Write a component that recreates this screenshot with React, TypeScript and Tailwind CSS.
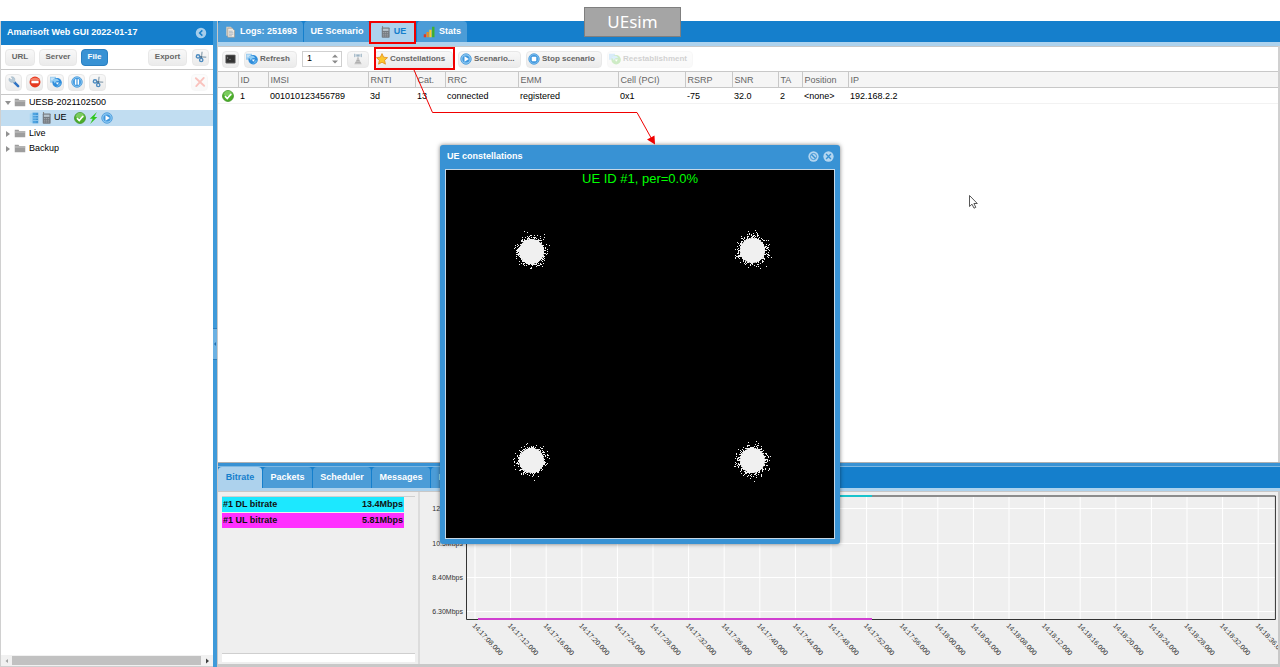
import React, { useState } from 'react';

type IconProps = { className?: string };

const CheckIcon = ({ className = 'w-3 h-3' }: IconProps) => (
  <svg viewBox="0 0 16 16" className={`${className} shrink-0`}>
    <circle cx="8" cy="8" r="7.3" fill="#4caf2a" stroke="#3a8f20" />
    <path d="M2 7a6 6 0 0 1 12 0q-6 2-12 0z" fill="#8fd873" opacity=".7" />
    <path d="M4 8.2l3 3.2 5.2-6" fill="none" stroke="#fff" strokeWidth="2.3" />
  </svg>
);

const PlayIcon = ({ className = 'w-3 h-3' }: IconProps) => (
  <svg viewBox="0 0 16 16" className={`${className} shrink-0`}>
    <circle cx="8" cy="8" r="7" fill="#8cc8f2" stroke="#4f9ddb" strokeWidth="1.2" />
    <circle cx="8" cy="8" r="4.8" fill="#3f97de" />
    <path d="M6 4.2v7.6l5.8-3.8z" fill="#fff" />
  </svg>
);

const StopIcon = ({ className = 'w-3 h-3' }: IconProps) => (
  <svg viewBox="0 0 16 16" className={`${className} shrink-0`}>
    <circle cx="8" cy="8" r="7" fill="#7fc0f0" stroke="#4f9ddb" strokeWidth="1.2" />
    <circle cx="8" cy="8" r="5.2" fill="#3f97de" />
    <rect x="5" y="5" width="6" height="6" rx="1" fill="#fff" />
  </svg>
);

const PauseIcon = ({ className = 'w-3 h-3' }: IconProps) => (
  <svg viewBox="0 0 16 16" className={`${className} shrink-0`}>
    <circle cx="8" cy="8" r="7" fill="#8cc8f2" stroke="#4f9ddb" strokeWidth="1.2" />
    <circle cx="8" cy="8" r="5.2" fill="#3f97de" />
    <path d="M6.2 4.3v7.4M9.8 4.3v7.4" stroke="#fff" strokeWidth="2" />
  </svg>
);

const RefreshIcon = ({ className = 'w-3 h-3' }: IconProps) => (
  <svg viewBox="0 0 16 16" className={`${className} shrink-0`}>
    <path d="M0 1h8v8H0z" fill="#9ccdf0" />
    <path d="M1 3h5M1 5h4" stroke="#e3f2fc" />
    <circle cx="9.500" cy="9" r="6.300" fill="#2f8ddb" />
    <path d="M3.500 5.500q6-4 9 1.500-5-1-6 3z" fill="#8fcdf5" />
    <path d="M15 10q-3 5-7.500 4.500 4-1 4-4.500z" fill="#6bb8ee" />
    <path d="M8 8.500h4L9.500 11.500z" fill="#fff" />
  </svg>
);

const RestoreIcon = ({ className = 'w-3 h-3' }: IconProps) => (
  <svg viewBox="0 0 16 16" className={`${className} shrink-0`}>
    <path d="M0 1h8v8H0z" fill="#7fbfec" />
    <circle cx="9.500" cy="9" r="6.300" fill="#5fc043" />
    <path d="M3.500 5.500q6-4 9 1.500-5-1-6 3z" fill="#8fcdf5" />
    <path d="M8 8.500h4L9.500 11.500z" fill="#fff" />
  </svg>
);

const CutIcon = ({ className = 'w-3 h-3' }: IconProps) => (
  <svg viewBox="0 0 16 16" className={`${className} shrink-0`}>
    <path d="M9.500 1L8.300 8.500M15 8.200L6 7.800" stroke="#9fb0bc" strokeWidth="2" />
    <circle cx="4" cy="7.200" r="2.200" fill="none" stroke="#4d8bc0" strokeWidth="1.900" />
    <circle cx="8.300" cy="12" r="2.200" fill="none" stroke="#4d8bc0" strokeWidth="1.900" />
    <circle cx="8.200" cy="8" r="1.500" fill="#4a6f8c" />
  </svg>
);

const WrenchIcon = () => (
  <svg viewBox="0 0 16 16" className="w-3 h-3 shrink-0">
    <path d="M8.500 8.500l5 5" stroke="#2f73c4" strokeWidth="3.400" strokeLinecap="round" />
    <path d="M1.500 3l3 2L6 3.500 4.200 1a4 4 0 0 1 4.800 5.200l1 1L8 9.200l-1.200-1A4 4 0 0 1 1.500 3z" fill="#b7cbd9" stroke="#8fa6b7" strokeWidth=".5" />
  </svg>
);

const NoEntryIcon = () => (
  <svg viewBox="0 0 16 16" className="w-3 h-3 shrink-0">
    <circle cx="8" cy="8" r="7.300" fill="#e5391f" />
    <path d="M1.500 6a7 6 0 0 1 13 0z" fill="#f48069" />
    <rect x="3.200" y="6.200" width="9.600" height="3.600" rx=".6" fill="#fff" />
  </svg>
);

const FolderIcon = () => (
  <svg viewBox="0 0 16 12" className="w-3 h-[9px] shrink-0">
    <path d="M1 1h5l1 1.500h8V11H1z" fill="#9e9e9e" />
    <path d="M1 4h14" stroke="#d8d8d8" strokeWidth="1" />
  </svg>
);

const ServerIcon = () => (
  <svg viewBox="0 0 14 16" className="w-[10px] h-3 shrink-0">
    <path d="M1 2l4-1.500V15.500L1 14z" fill="#a6d6f5" />
    <path d="M5 .5h8v15H5z" fill="#4ea3e0" />
    <path d="M5 4.500h8M5 8h8M5 11.500h8" stroke="#9fd0f2" strokeWidth="1" />
    <path d="M10.500 2.500h1.500M10.500 6.300h1.500M10.500 9.800h1.500M10.500 13.500h1.500" stroke="#1c6db0" strokeWidth="1" />
  </svg>
);

const PhoneIcon = () => (
  <svg viewBox="0 0 12 16" className="w-[9px] h-3 shrink-0">
    <path d="M2 0v3" stroke="#888" strokeWidth="1.500" />
    <rect x="1" y="2" width="10.500" height="13.500" rx="1" fill="#747a80" />
    <rect x="2.500" y="3.500" width="7.500" height="3" fill="#b9c6cf" />
    <path d="M2.500 8.700h7.500M2.500 11h7.500M2.500 13.300h7.500" stroke="#a9afb4" strokeWidth="1" strokeDasharray="1.800 .8" />
  </svg>
);

const BoltIcon = () => (
  <svg viewBox="0 0 12 16" className="w-[9px] h-3 shrink-0">
    <path d="M10.500 0L1 9h4l-3.500 7L11 6.500H7z" fill="#2fc71e" />
  </svg>
);

const DocIcon = () => (
  <svg viewBox="0 0 16 16" className="w-3 h-3 shrink-0">
    <path d="M3 1h6l3 3v9H3z" fill="#d9cfc0" />
    <path d="M5 3h6l3 3v9H5z" fill="#efe9e0" stroke="#9a9288" strokeWidth=".8" />
    <path d="M6.500 7h5M6.500 9h6M6.500 11h6M6.500 13h4" stroke="#8fa6bb" strokeWidth=".9" />
  </svg>
);

const StatsIcon = () => (
  <svg viewBox="0 0 16 16" className="w-3 h-3 shrink-0">
    <path d="M1 11h3v4H1z" fill="#e53b1e" />
    <path d="M4.700 8h3v7h-3z" fill="#f08a1d" />
    <path d="M8.400 5h3v10h-3z" fill="#f3cf2e" />
    <path d="M12.100 1h3.200v14h-3.200z" fill="#3fb02c" />
  </svg>
);

const TerminalIcon = () => (
  <svg viewBox="0 0 16 14" className="w-[11px] h-[10px] shrink-0">
    <rect x="1" y="1" width="14" height="12" rx="1" fill="#333" stroke="#8a8a8a" />
    <path d="M3 4l1.500 1.200L3 6.500M6 7.500h2.500" fill="none" stroke="#bbb" strokeWidth=".8" />
  </svg>
);

const AntennaIcon = () => (
  <svg viewBox="0 0 16 16" className="w-3 h-3 shrink-0 opacity-60">
    <path d="M3.500 1v4.500M12.500 1v4.500M5.500 1.500v3.500M10.500 1.500v3.500" fill="none" stroke="#5d86a3" strokeWidth="1.200" />
    <circle cx="8" cy="3.300" r="1.700" fill="#5d86a3" />
    <path d="M7 5.500h2l1 4 3 5.500H3l3-5.500z" fill="#a5a5a5" />
    <path d="M6 10h4M4.500 12.500h7" fill="none" stroke="#777" strokeWidth="1" />
  </svg>
);

const StarIcon = () => (
  <svg viewBox="0 0 16 16" className="w-3 h-3 shrink-0">
    <path d="M8 .8l2.200 4.800 5.200.6-3.900 3.500 1.100 5.200L8 12.300l-4.600 2.600 1.100-5.200L.6 6.200l5.200-.6z" fill="#fcc62d" stroke="#e08a12" strokeWidth="1" />
  </svg>
);

const Twisty = ({ open }: { open?: boolean }) => (
  <svg viewBox="0 0 6 6" className="w-[6px] h-[6px] shrink-0">
    <path d={open ? 'M0 1h6L3 5z' : 'M1 0v6l4-3z'} fill="#919191" />
  </svg>
);

const buttonBase = 'flex items-center h-[17px] rounded-sm border text-[8px] font-bold';
const greyColours = 'border-[#e8e8e8] bg-linear-to-b from-[#f8f8f8] to-[#ebebeb] text-[#666]';
const buttonGrey = `${buttonBase} ${greyColours} justify-center`;
const buttonIcon = `${buttonBase} ${greyColours} justify-start gap-0.5 pl-px whitespace-nowrap`;

const tabs = [
  { label: 'Logs: 251693', icon: <DocIcon />, width: 'w-[85px]' },
  { label: 'UE Scenario', icon: null, width: 'w-[66px]' },
  { label: 'UE', icon: <PhoneIcon />, width: 'w-[45px]' },
  { label: 'Stats', icon: <StatsIcon />, width: 'w-[50px]' },
];

const statTabs = [
  { label: 'Bitrate', width: 'w-[44px]' },
  { label: 'Packets', width: 'w-[49px]' },
  { label: 'Scheduler', width: 'w-[58px]' },
  { label: 'Messages', width: 'w-[58px]' },
  { label: 'Info', width: 'w-[32px]' },
];

const columns = [
  { title: '', value: '', width: 'w-[20px]' },
  { title: 'ID', value: '1', width: 'w-[30px]' },
  { title: 'IMSI', value: '001010123456789', width: 'w-[100px]' },
  { title: 'RNTI', value: '3d', width: 'w-[47px]' },
  { title: 'Cat.', value: '13', width: 'w-[30px]' },
  { title: 'RRC', value: 'connected', width: 'w-[73px]' },
  { title: 'EMM', value: 'registered', width: 'w-[100px]' },
  { title: 'Cell (PCI)', value: '0x1', width: 'w-[67px]' },
  { title: 'RSRP', value: '-75', width: 'w-[47px]' },
  { title: 'SNR', value: '32.0', width: 'w-[46px]' },
  { title: 'TA', value: '2', width: 'w-[24px]' },
  { title: 'Position', value: '<none>', width: 'w-[46px]' },
  { title: 'IP', value: '192.168.2.2', width: '' },
];

function Sidebar() {
  return (
    <aside className="flex w-[213px] shrink-0 flex-col border-l border-[#d0d0d0]">
      <header className="flex h-6 items-center justify-between bg-[#157fcc] pl-1.5 pr-1.5">
        <h1 className="text-[9px] font-bold text-white whitespace-nowrap">Amarisoft Web GUI 2022-01-17</h1>
        <button aria-label="Collapse">
          <svg viewBox="0 0 16 16" className="w-3 h-3">
            <circle cx="8" cy="8" r="7" fill="#a5cdeb" />
            <path d="M9.800 4.500L6.200 8l3.600 3.500" fill="none" stroke="#157fcc" strokeWidth="2" />
          </svg>
        </button>
      </header>
      <div className="flex h-[25px] items-center border-b border-[#c8c8c8] px-1">
        <button className={`${buttonGrey} w-[30px]`}>URL</button>
        <button className={`${buttonGrey} ml-1 w-[38px]`}>Server</button>
        <button className={`${buttonBase} ml-1 w-[27px] justify-center border-[#2a7fc0] bg-[#3892d4] text-white`}>File</button>
        <span className="flex-1" />
        <button className={`${buttonGrey} w-[39px]`}>Export</button>
        <button className={`${buttonGrey} ml-[5px] w-[17px]`} aria-label="Cut"><CutIcon /></button>
      </div>
      <div className="flex h-[25px] items-center gap-1 border-b border-[#c8c8c8] px-1">
        <button className={`${buttonGrey} w-[17px]`} aria-label="Settings"><WrenchIcon /></button>
        <button className={`${buttonGrey} w-[17px]`} aria-label="Remove"><NoEntryIcon /></button>
        <button className={`${buttonGrey} w-[17px]`} aria-label="Reload"><RefreshIcon /></button>
        <button className={`${buttonGrey} w-[17px]`} aria-label="Pause"><PauseIcon /></button>
        <button className={`${buttonGrey} w-[17px]`} aria-label="Clear"><CutIcon /></button>
        <span className="flex-1" />
        <button disabled className={`${buttonGrey} mr-px w-[17px] opacity-30`} aria-label="Delete">
          <svg viewBox="0 0 16 16" className="w-3 h-3">
            <path d="M2.500 3l11 10M13 2.500L3 13.500" stroke="#ee3b2a" strokeWidth="2.500" strokeLinecap="round" />
          </svg>
        </button>
      </div>
      <ul className="flex-1 text-[9px] text-black">
        <li className="flex h-[15px] items-center gap-[3px] pl-1"><Twisty open /><FolderIcon />UESB-2021102500</li>
        <li className="flex h-4 items-center gap-[3px] bg-[#c1ddf1] pl-7">
          <ServerIcon />
          <PhoneIcon />
          <span className="mr-1">UE</span>
          <CheckIcon />
          <BoltIcon />
          <PlayIcon />
        </li>
        <li className="flex h-[15px] items-center gap-[3px] pl-1"><Twisty /><FolderIcon />Live</li>
        <li className="flex h-[15px] items-center gap-[3px] pl-1"><Twisty /><FolderIcon />Backup</li>
      </ul>
      <div className="flex h-3 items-center border-b border-[#d0d0d0] bg-[#f1f1f1]">
        <svg viewBox="0 0 11 10" className="w-[11px] h-[10px]"><path d="M7 3v4L4.500 5z" fill="#a3a3a3" /></svg>
        <div className="h-[9px] flex-1 bg-[#c1c1c1]" />
        <svg viewBox="0 0 12 10" className="w-3 h-[10px]"><path d="M5 2.500v5L8 5z" fill="#404040" /></svg>
      </div>
    </aside>
  );
}

function Toolbar() {
  const [count, setCount] = useState(1);
  return (
    <div className="flex h-[25px] items-center gap-[5px] border-t border-[#c8c8c8] pl-1">
      <button className={`${buttonGrey} w-[17px]`} aria-label="Terminal"><TerminalIcon /></button>
      <button className={`${buttonIcon} w-[53px]`}><RefreshIcon />Refresh</button>
      <div className="flex h-4 w-[40px] items-center border border-[#cfcfcf] bg-white">
        <input
          type="number"
          aria-label="Count"
          value={count}
          onChange={(e) => setCount(Number(e.target.value))}
          className="w-7 pl-1 text-[9px] outline-none [appearance:textfield] [&::-webkit-inner-spin-button]:appearance-none" />
        <svg viewBox="0 0 8 12" className="w-2 h-3">
          <path d="M1 4.500h6L4 1.500zM1 7.500h6L4 10.500z" fill="#8a8a8a" />
        </svg>
      </div>
      <button className={`${buttonGrey} w-[22px]`} aria-label="Cells"><AntennaIcon /></button>
      <button className={`${buttonIcon} w-[79px]`}><StarIcon />Constellations</button>
      <button className={`${buttonIcon} w-[63px]`}><PlayIcon />Scenario...</button>
      <button className={`${buttonIcon} w-[76px]`}><StopIcon />Stop scenario</button>
      <button disabled className={`${buttonIcon} w-[86px] opacity-30`}><RestoreIcon />Reestablishment</button>
    </div>
  );
}

function UeTable() {
  return (
    <table className="w-full table-fixed border-collapse text-left text-[9px]">
      <thead>
        <tr className="h-4 border-y border-[#c8c8c8] bg-[#f5f5f5] text-[#666]">
          {columns.map((c, i) => (
            <th key={i} className={`${c.width} border-r border-[#c8c8c8] p-0 pl-0.5 font-normal leading-[14px] whitespace-nowrap last:border-r-0`}>
              {c.title}
            </th>
          ))}
        </tr>
      </thead>
      <tbody>
        <tr className="h-4 border-b border-[#f2f2f2] text-black">
          {columns.map((c, i) => (
            <td key={i} className="p-0 pl-0.5 leading-[14px] whitespace-nowrap">
              {i === 0 ? <CheckIcon className="ml-0.5 w-3 h-3" /> : c.value}
            </td>
          ))}
        </tr>
      </tbody>
    </table>
  );
}

// plot geometry, relative to the chart panel
const LEFT = 46.5;
const TOP = 4;
const BOTTOM = 127.5;
const STEP = 35.6;
const yTicks = [
  { y: 16.5, label: '12.6Mbps' },
  { y: 51.5, label: '10.5Mbps' },
  { y: 85.5, label: '8.40Mbps' },
  { y: 119.5, label: '6.30Mbps' },
];
const xTicks = Array.from({ length: 23 }, (_, i) => {
  const s = 8 + i * 4;
  const minute = 17 + Math.floor(s / 60);
  return `14:${minute}:${String(s % 60).padStart(2, '0')}.000`;
});

function BitrateChart() {
  return (
    <svg className="h-full w-full text-[7px]">
      {yTicks.map((t) => (
        <g key={t.label}>
          <line x1={LEFT} x2="99.7%" y1={t.y} y2={t.y} stroke="#fff" />
          <text x="43" y={t.y + 2} textAnchor="end" fill="#333">{t.label}</text>
        </g>
      ))}
      {xTicks.map((label, i) => {
        const x = 55 + i * STEP;
        return (
          <g key={label}>
            <line x1={x} x2={x} y1={TOP} y2={BOTTOM} stroke="#fff" />
            <text transform={`translate(${x - 3} 134) rotate(47)`} fill="#333">{label}</text>
          </g>
        );
      })}
      <line x1={LEFT} x2="99.7%" y1={TOP} y2={TOP} stroke="#8c8c8c" strokeWidth="2" />
      <line x1={LEFT} x2={LEFT} y1={TOP} y2={BOTTOM} stroke="#333" />
      <line x1="99.7%" x2="99.7%" y1={TOP} y2={BOTTOM} stroke="#333" />
      <line x1={LEFT} x2="99.7%" y1={BOTTOM} y2={BOTTOM} stroke="#333" />
      <line x1="58" x2="452" y1={TOP} y2={TOP} stroke="#19c3cc" strokeWidth="2" />
      <line x1="58" x2="452" y1={BOTTOM - 0.5} y2={BOTTOM - 0.5} stroke="#d03fd0" strokeWidth="2" />
    </svg>
  );
}

// deterministic noise so that the clouds stay the same between renders
function cloud(cx: number, cy: number, seed: number) {
  let s = seed;
  const rand = () => {
    s = (s + 0x6d2b79f5) | 0;
    let t = Math.imul(s ^ (s >>> 15), 1 | s);
    t = (t + Math.imul(t ^ (t >>> 7), 61 | t)) ^ t;
    return ((t ^ (t >>> 14)) >>> 0) / 4294967296;
  };
  let d = '';
  for (let i = 0; i < 2200; i++) {
    const r = 5.5 * Math.sqrt(-2 * Math.log(1 - rand() * 0.9995));
    const a = rand() * Math.PI * 2;
    d += `M${Math.round(cx + r * Math.cos(a))} ${Math.round(cy + r * Math.sin(a))}h1v1h-1z`;
  }
  return d;
}

const clouds = [
  { x: 85, y: 81, seed: 1187 },
  { x: 306, y: 80, seed: 9041 },
  { x: 85, y: 290, seed: 4523 },
  { x: 306, y: 290, seed: 7719 },
];

function ConstellationWindow() {
  return (
    <section className="absolute left-[440px] top-[145px] w-[400px] rounded-[3px] bg-[#3892d4] px-[5px] pb-[5px] shadow-[0_0_4px_rgba(0,0,0,0.5)]">
      <header className="flex h-6 items-center gap-1 pb-px pl-0.5 pr-px">
        <h2 className="flex-1 text-[9px] font-bold text-white">UE constellations</h2>
        <button aria-label="Pin">
          <svg viewBox="0 0 16 16" className="w-[11px] h-[11px]">
            <circle cx="8" cy="8" r="7.500" fill="#b4d6f0" />
            <circle cx="8" cy="8" r="4.500" fill="none" stroke="#3892d4" strokeWidth="1.300" />
            <path d="M5 5l6 6" fill="none" stroke="#3892d4" strokeWidth="2" />
          </svg>
        </button>
        <button aria-label="Close">
          <svg viewBox="0 0 16 16" className="w-[11px] h-[11px]">
            <circle cx="8" cy="8" r="7.500" fill="#b4d6f0" />
            <path d="M4.500 4.500l7 7M11.500 4.500l-7 7" stroke="#3892d4" strokeWidth="2" />
          </svg>
        </button>
      </header>
      <div className="border border-[#c5d7e6] bg-black">
        <p className="h-5 text-center text-[13px] leading-[18px] text-[#00ff00]">UE ID #1, per=0.0%</p>
        <svg viewBox="0 20 388 348" className="block w-full">
          {clouds.map((c) => (
            <g key={c.seed} fill="#f0f0f0">
              <circle cx={c.x + 0.5} cy={c.y + 0.5} r="12.500" />
              <path d={cloud(c.x, c.y, c.seed)} />
            </g>
          ))}
        </svg>
      </div>
    </section>
  );
}

function Annotations() {
  return (
    <>
      <svg className="pointer-events-none absolute inset-0 h-full w-full">
        <g fill="none" stroke="#f00000">
          <rect x="370" y="22" width="45" height="21" strokeWidth="2" />
          <rect x="375" y="48" width="79" height="21" strokeWidth="2" />
          <path d="M414 70l18.500 42.500H637l15 27" />
        </g>
        <path d="M647 139.500l7.500-4 .5 9z" fill="#f00000" />
        <path d="M969.500 195.500v11l2.500-2.300 2 4 1.800-.9-1.900-3.800h3.400z" fill="#fff" stroke="#444" strokeWidth=".9" />
      </svg>
      <div className="absolute left-[584px] top-[7px] flex h-[30px] w-[97px] items-center justify-center border border-[#7f7f7f] bg-[#a5a5a5] font-['Noto_Sans',sans-serif] text-[17px] text-white">
        UEsim
      </div>
    </>
  );
}

export default function App() {
  const [active, setActive] = useState('UE');
  const [stat, setStat] = useState('Bitrate');
  return (
    <div className="relative flex min-h-screen flex-col bg-white pt-[21px] font-['Liberation_Sans',Arial,sans-serif]">
      <div className="flex flex-1">
        <Sidebar />
        <div className="flex w-1 shrink-0 items-center bg-[#3f9ad9]">
          <div className="flex h-8 w-full items-center border-y border-[#2a7fc0] bg-[#6bb1e3]">
            <svg viewBox="0 0 4 4" className="w-1 h-1"><path d="M3 0v4L1 2z" fill="#2270b0" /></svg>
          </div>
        </div>
        <main className="flex min-w-0 flex-1 flex-col border-l border-[#c8c8c8]">
          <nav className="flex h-[25px] gap-px border-b-4 border-[#add2ed] bg-[#157fcc]">
            {tabs.map((t) => (
              <button
                key={t.label}
                onClick={() => setActive(t.label)}
                className={`${t.width} flex items-center justify-center gap-1 rounded-t-sm text-[9px] font-bold whitespace-nowrap ${active === t.label ? 'bg-[#add2ed] text-[#157fcc]' : 'bg-[#4b9cd7] text-white'}`}>
                {t.icon}
                {t.label}
              </button>
            ))}
          </nav>
          <div className="flex flex-1 flex-col border-r-2 border-[#d0d0d0]">
            <Toolbar />
            <UeTable />
          </div>
          <div className="h-[5px] border-t border-b border-t-[#b0b0b0] border-b-[#7fb8e2] bg-[#3892d4]" />
          <nav className="flex h-6 gap-px border-b-3 border-[#add2ed] bg-[#157fcc]">
            {statTabs.map((t) => (
              <button
                key={t.label}
                onClick={() => setStat(t.label)}
                className={`${t.width} flex items-center justify-center rounded-t-sm text-[9px] font-bold ${stat === t.label ? 'bg-[#add2ed] text-[#157fcc]' : 'bg-[#4b9cd7] text-white'}`}>
                {t.label}
              </button>
            ))}
          </nav>
          <div className="flex h-44 border-r-2 border-b-[3px] border-t border-[#c8c8c8] bg-[#efefef]">
            <div className="flex w-[202px] shrink-0 flex-col border-r-2 border-[#dcdcdc] pt-1 pb-0.5 pl-1 pr-[3px]">
              <ul className="flex-1 border-t border-b border-[#cfcfcf] pr-[11px] text-[9px] font-bold text-[#111]">
                <li className="mb-px flex h-[15px] items-center justify-between bg-[#1ce8ff] px-px">
                  <span>#1 DL bitrate</span><span>13.4Mbps</span>
                </li>
                <li className="flex h-[15px] items-center justify-between bg-[#ff30ff] px-px">
                  <span>#1 UL bitrate</span><span>5.81Mbps</span>
                </li>
              </ul>
              <div className="h-2 bg-white" />
            </div>
            <div className="min-w-0 flex-1">
              <BitrateChart />
            </div>
          </div>
        </main>
      </div>
      <ConstellationWindow />
      <Annotations />
    </div>
  );
}
